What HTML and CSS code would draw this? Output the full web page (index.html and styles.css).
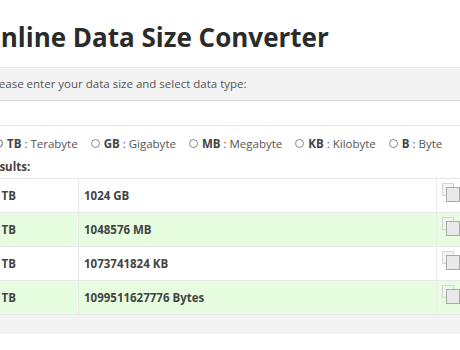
FILE: index.html
```html
<!DOCTYPE html>
<html>
<head>
<meta charset="utf-8">
<link rel="stylesheet" href="styles.css">
</head>
<body>
<div class="page">
  <h1 class="title">Online Data Size Converter</h1>
  <div class="panel">
    <div class="panel-head">Please enter your data size and select data type:</div>
    <div class="panel-body">
      <input class="size-input" type="text" value="1">
      <div class="radios">
        <label class="radio"><span class="dot checked"></span><span><b>TB</b> : Terabyte</span></label>
        <label class="radio"><span class="dot"></span><span><b>GB</b> : Gigabyte</span></label>
        <label class="radio"><span class="dot"></span><span><b>MB</b> : Megabyte</span></label>
        <label class="radio"><span class="dot"></span><span><b>KB</b> : Kilobyte</span></label>
        <label class="radio"><span class="dot"></span><span><b>B</b> : Byte</span></label>
      </div>
      <div class="results-label">Results:</div>
      <table class="results">
        <tr><td class="c1">1 TB</td><td class="c2">1024 GB</td><td class="c3"><svg class="copy" width="20" height="20" viewBox="0 0 20 20"><rect x="0.5" y="0.5" width="11" height="12" fill="#f4f4f4" stroke="#d4d4d4"/><rect x="4.5" y="4.5" width="13" height="14" fill="#e9e9e9" stroke="#a9a9a9"/></svg></td></tr>
        <tr class="alt"><td class="c1">1 TB</td><td class="c2">1048576 MB</td><td class="c3"><svg class="copy" width="20" height="20" viewBox="0 0 20 20"><rect x="0.5" y="0.5" width="11" height="12" fill="#f4f4f4" stroke="#d4d4d4"/><rect x="4.5" y="4.5" width="13" height="14" fill="#e9e9e9" stroke="#a9a9a9"/></svg></td></tr>
        <tr><td class="c1">1 TB</td><td class="c2">1073741824 KB</td><td class="c3"><svg class="copy" width="20" height="20" viewBox="0 0 20 20"><rect x="0.5" y="0.5" width="11" height="12" fill="#f4f4f4" stroke="#d4d4d4"/><rect x="4.5" y="4.5" width="13" height="14" fill="#e9e9e9" stroke="#a9a9a9"/></svg></td></tr>
        <tr class="alt"><td class="c1">1 TB</td><td class="c2">1099511627776 Bytes</td><td class="c3"><svg class="copy" width="20" height="20" viewBox="0 0 20 20"><rect x="0.5" y="0.5" width="11" height="12" fill="#f4f4f4" stroke="#d4d4d4"/><rect x="4.5" y="4.5" width="13" height="14" fill="#e9e9e9" stroke="#a9a9a9"/></svg></td></tr>
      </table>
    </div>
    <div class="panel-foot"></div>
  </div>
</div>
</body>
</html>
```
FILE: styles.css
```css
html, body { margin: 0; padding: 0; background: #fff; }
body { font-family: "Open Sans", sans-serif; color: #555; font-size: 11.5px; overflow: hidden; }
.page { margin-left: -20px; width: 517px; }
.title { font-size: 26px; font-weight: 700; color: #2b2b2b; margin: 0; padding-top: 18px; line-height: 38px; height: 49px; }
.panel-head { background: #f3f3f3; border-top: 1px solid #eaeaea; border-bottom: 1px solid #dcdcdc; height: 32px; line-height: 32px; padding-left: 9px; color: #555; }
.size-input { display: block; width: 100%; box-sizing: border-box; height: 25px; border: none; border-bottom: 1px solid #e6e6e6; font: inherit; color: #fff; padding: 0; outline: none; background: #fff; }
.radios { display: flex; gap: 13px; height: 34px; align-items: center; padding-left: 14px; }
.radio { display: flex; align-items: center; gap: 4px; color: #555; }
.radio b { color: #444; }
.dot { width: 9px; height: 9px; border: 1px solid #888; border-radius: 50%; box-sizing: border-box; }
.dot.checked { border-color: #777; box-shadow: inset 0 0 0 2px #fff, inset 0 0 0 5px #888; }
.results-label { font-weight: 700; color: #444; height: 18px; line-height: 14px; padding-left: 5px; }
.results { border-collapse: collapse; width: 100%; }
.results td { height: 33px; padding: 0 6px 0 5px; border-top: 1px solid #e8e8e8; font-weight: 700; color: #444; }
.results tr.alt td { background: #e6fde0; }
.results td.c1 { width: 80px; border-right: 1px solid #e8e8e8; padding-left: 12px; }
.results td.c3 { width: 55px; border-left: 1px solid #ececec; padding: 0 0 0 5px; vertical-align: top; }
.copy { display: block; margin-top: 4px; }
.panel-foot { background: #f3f3f3; height: 19px; border-top: 1px solid #e8e8e8; }
```
